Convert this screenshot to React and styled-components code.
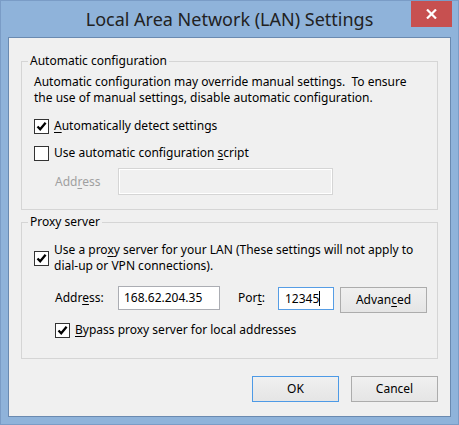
import React from 'react'
import styled, { createGlobalStyle } from 'styled-components'

const GlobalStyle = createGlobalStyle`
  html, body {
    margin: 0;
    padding: 0;
  }
  body {
    font-family: "Noto Sans", "Open Sans", sans-serif;
    font-size: 12px;
    line-height: 16px;
    color: #000;
    background: #8fb3da;
  }
`

const Window = styled.div`
  width: 459px;
  height: 425px;
  box-sizing: border-box;
  display: flex;
  flex-direction: column;
  background: #8fb3da;
  border: 1px solid #7a9cc6;
`

const TitleBar = styled.div`
  height: 36px;
  flex: none;
  display: grid;
  grid-template-columns: 41px 1fr 41px;
  padding: 0 6px;
`

const Title = styled.div`
  grid-column: 2;
  align-self: center;
  text-align: center;
  font-size: 18px;
  line-height: 24px;
  color: #222;
  white-space: nowrap;
`

const CloseButton = styled.div`
  grid-column: 3;
  align-self: start;
  height: 26px;
  background: #c75050;
  display: flex;
  align-items: center;
  justify-content: center;
`

const Client = styled.div`
  flex: 1;
  margin: 0 7px 7px;
  background: #f0f0f0;
  border: 1px solid #6a8ab0;
  padding: 15px 12px 0;
  display: flex;
  flex-direction: column;
`

const Group = styled.fieldset`
  margin: ${p => p.$top || 0}px 0 0;
  padding: ${p => p.$padTop}px 12px ${p => p.$padBottom}px;
  border: 1px solid #d5d5d5;
  min-width: 0;
`

const Legend = styled.legend`
  margin-left: -6px;
  padding: 0 2px;
  line-height: 16px;
`

const Text = styled.p`
  margin: 0;
  white-space: nowrap;
`

const CheckRow = styled.div`
  display: flex;
  align-items: center;
  gap: 5px;
  margin: ${p => p.$top || 0}px 0 0 ${p => p.$indent || 0}px;
  white-space: nowrap;
`

const Box = styled.span`
  width: 13px;
  height: 13px;
  flex: none;
  border: 1px solid #333;
  background: #fff;
  display: flex;
  align-items: center;
  justify-content: center;
`

const Key = styled.span`
  text-decoration: underline;
  text-underline-offset: 2px;
`

const FieldRow = styled.div`
  display: flex;
  align-items: ${p => p.$align || 'center'};
  margin: ${p => p.$top}px 0 0 21px;
`

const Label = styled.span`
  width: ${p => p.$width}px;
  margin-left: ${p => p.$left || 0}px;
  flex: none;
  line-height: 24px;
  color: ${p => (p.$disabled ? '#a0a0a0' : '#000')};
  white-space: nowrap;
`

const Input = styled.div`
  box-sizing: border-box;
  width: ${p => p.$width}px;
  height: ${p => p.$height || 24}px;
  margin-top: ${p => p.$offset || 0}px;
  flex: none;
  padding-left: ${p => p.$pad || 5}px;
  display: flex;
  align-items: center;
  background: ${p => (p.$disabled ? '#f0f0f0' : '#fff')};
  border: 1px solid
    ${p => (p.$disabled ? '#d5d5d5' : p.$focused ? '#569de5' : '#abadb3')};
  box-shadow: ${p => (p.$disabled ? 'inset 0 0 0 1px #fff' : 'none')};
  white-space: nowrap;
`

const Caret = styled.span`
  width: 1px;
  height: 15px;
  background: #000;
`

const Button = styled.div`
  box-sizing: border-box;
  width: 87px;
  height: 26px;
  margin-left: ${p => p.$left || 0}px;
  margin-top: ${p => p.$offset || 0}px;
  flex: none;
  display: flex;
  align-items: center;
  justify-content: center;
  background: linear-gradient(#f0f0f0, #e5e5e5);
  border: 1px solid ${p => (p.$default ? '#4d9ae6' : '#acacac')};
  white-space: nowrap;
`

const Footer = styled.div`
  display: flex;
  justify-content: flex-end;
  gap: 12px;
  margin-top: 17px;
`

const CheckBox = ({ checked }) => (
  <Box>
    {checked && (
      <svg width='11' height='11' viewBox='0 0 11 11'>
        <path
          d='M1.5 5.5 L4.2 8.3 L9.6 1.8'
          fill='none'
          stroke='#000'
          strokeWidth='2.3'
        />
      </svg>
    )}
  </Box>
)

const App = () => {
  return (
    <>
      <GlobalStyle />
      <Window>
        <TitleBar>
          <Title>Local Area Network (LAN) Settings</Title>
          <CloseButton>
            <svg width='11' height='10' viewBox='0 0 11 10'>
              <path
                d='M1 0.5 L10 9.5 M10 0.5 L1 9.5'
                stroke='#fff'
                strokeWidth='2.2'
              />
            </svg>
          </CloseButton>
        </TitleBar>

        <Client>
          <Group $padTop={5} $padBottom={14}>
            <Legend>Automatic configuration</Legend>
            <Text>
              Automatic configuration may override manual settings.{'\u00a0'} To
              ensure
              <br />
              the use of manual settings, disable automatic configuration.
            </Text>
            <CheckRow $top={12}>
              <CheckBox checked />
              <span>
                <Key>A</Key>utomatically detect settings
              </span>
            </CheckRow>
            <CheckRow $top={11}>
              <CheckBox />
              <span>
                Use automatic configuration <Key>s</Key>cript
              </span>
            </CheckRow>
            <FieldRow $top={7}>
              <Label $width={63} $disabled>
                Add<Key>r</Key>ess
              </Label>
              <Input $width={215} $height={27} $disabled />
            </FieldRow>
          </Group>

          <Group $top={4} $padTop={12} $padBottom={20}>
            <Legend>Proxy server</Legend>
            <CheckRow>
              <CheckBox checked />
              <span>
                Use a pro<Key>x</Key>y server for your LAN (These settings will
                not apply to
                <br />
                dial-up or VPN connections).
              </span>
            </CheckRow>
            <FieldRow $top={12} $align='flex-start'>
              <Label $width={63}>
                Addr<Key>e</Key>ss:
              </Label>
              <Input $width={102}>168.62.204.35</Input>
              <Label $width={40} $left={18}>
                Por<Key>t</Key>:
              </Label>
              <Input $width={56} $height={23} $offset={1} $pad={6} $focused>
                12345
                <Caret />
              </Input>
              <Button $left={6} $offset={1}>
                Advan<Key>c</Key>ed
              </Button>
            </FieldRow>
            <CheckRow $top={9} $indent={21}>
              <CheckBox checked />
              <span>
                <Key>B</Key>ypass proxy server for local addresses
              </span>
            </CheckRow>
          </Group>

          <Footer>
            <Button $default>OK</Button>
            <Button>Cancel</Button>
          </Footer>
        </Client>
      </Window>
    </>
  )
}

export default App
